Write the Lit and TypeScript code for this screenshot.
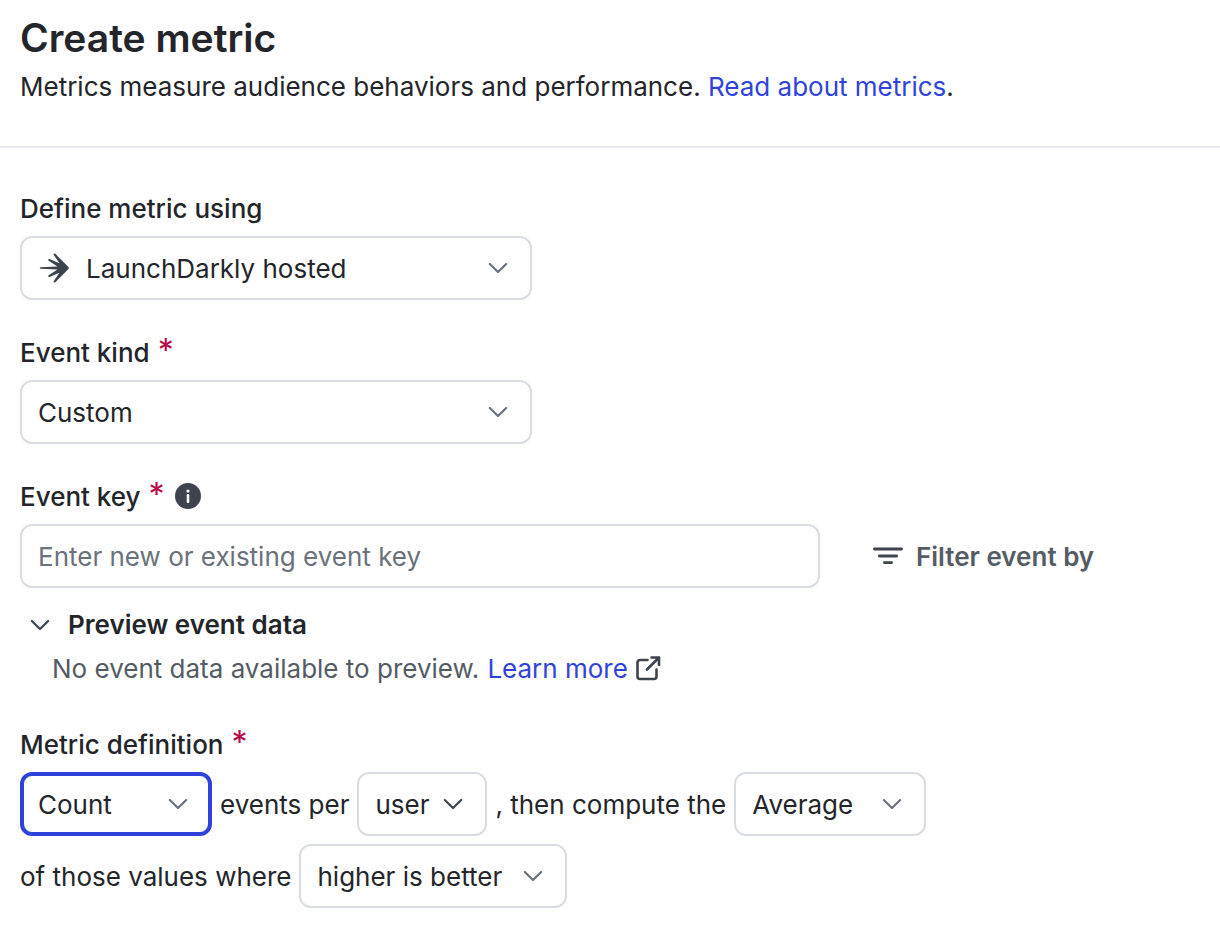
import { LitElement, html, css } from "lit";
import { customElement } from "lit/decorators.js";

@customElement("metric-chevron")
class MetricChevron extends LitElement {
  static styles = css`
    :host { display: block; width: 20px; height: 12px; }
    svg { display: block; }
  `;
  render() {
    return html`<svg width="20" height="12" viewBox="0 0 20 12" fill="none" stroke="currentColor" stroke-width="2.2" stroke-linecap="round" stroke-linejoin="round" aria-hidden="true"><path d="M1.8 2l8.2 8 8.2-8" /></svg>`;
  }
}

@customElement("app-root")
class AppRoot extends LitElement {
  static styles = css`
    :host {
      display: block;
      min-height: 100vh;
      background: #fff;
      color: #23252a;
      font: 400 26px/32px Inter, "Liberation Sans", sans-serif;
    }
    * { box-sizing: border-box; }
    header { padding: 14px 20px 42px; border-bottom: 2px solid #e9eef3; }
    h1 { margin: 0; font-size: 39px; line-height: 48px; font-weight: 600; }
    p { margin: 0; }
    .lead { margin-top: 8px; line-height: 34px; }
    a { color: #2f43dc; text-decoration: none; }
    form { padding: 44px 20px 18px; display: flex; flex-direction: column; gap: 36px; }
    .label { display: flex; align-items: center; height: 34px; font-weight: 500; margin-bottom: 10px; }
    .req { align-self: flex-start; color: #b80a48; margin-left: 8px; font-size: 32px; line-height: 30px; font-weight: 400; }
    .info { margin-left: 10px; }
    .box { position: relative; display: flex; align-items: center; height: 64px; }
    select, input {
      appearance: none;
      width: 100%;
      height: 64px;
      margin: 0;
      padding: 0 16px;
      border: 2px solid #d8dde4;
      border-radius: 12px;
      background: #fff;
      color: inherit;
      font: inherit;
      outline: none;
    }
    select { padding-top: 2px; }
    input::placeholder { color: #69717b; opacity: 1; }
    .wide { max-width: 512px; }
    .hosted select { padding-left: 64px; }
    .logo { position: absolute; left: 18px; top: 16px; pointer-events: none; }
    metric-chevron { position: absolute; right: 24px; top: 26px; pointer-events: none; color: #69717d; }
    .tight metric-chevron { color: #3d444d; }
    .row { display: flex; align-items: center; gap: 52px; }
    .row .box { flex: 0 1 800px; }
    button { display: flex; align-items: center; border: 0; background: none; padding: 0; margin: 0; font: inherit; color: inherit; }
    .filter { gap: 12px; font-weight: 600; color: #545b64; white-space: nowrap; }
    .filter span, .definition > span:not(.box) { padding-top: 2px; }
    .toggle { font-weight: 600; gap: 18px; margin: 20px 0 0 10px; height: 34px; }
    .toggle metric-chevron { position: static; color: #3d444d; }
    .preview { margin: 10px 0 6px 32px; display: flex; align-items: center; height: 34px; color: #545b64; gap: 8px; }
    .preview a { display: flex; align-items: center; gap: 8px; }
    .definition { display: flex; flex-wrap: wrap; align-items: center; gap: 8px; max-width: 940px; }
    .count { width: 192px; }
    .count select { border: 4px solid #2f43dc; padding: 2px 14px 0; }
    .user { width: 130px; }
    .average { width: 192px; }
    .better { width: 268px; }
  `;

  private req() {
    return html`<span class="req" aria-hidden="true">*</span>`;
  }

  private pick(id: string, cls: string, options: string[], label: string) {
    return html`<span class="box ${cls}">
      <select id=${id} aria-label=${label}>${options.map((o) => html`<option>${o}</option>`)}</select>
      <metric-chevron></metric-chevron>
    </span>`;
  }

  render() {
    return html`
      <header>
        <h1>Create metric</h1>
        <p class="lead">Metrics measure audience behaviors and performance. <a href="#metrics">Read about metrics</a>.</p>
      </header>
      <form>
        <div>
          <label class="label" for="source">Define metric using</label>
          <div class="box wide hosted">
            <select id="source"><option>LaunchDarkly hosted</option></select>
            <svg class="logo" width="32" height="32" viewBox="0 0 32 32" fill="#3d444d" aria-hidden="true">
              <path d="M30.2 14.7L17.3 1.8q-.9-.6-1.5 0-.5.6 0 1.3l5.6 8.2-9.8-4.2q-.9-.3-1.3.4-.3.7.4 1.2l8.8 5.9L2.6 15.2q-.8.1-.8.8 0 .7.8.8l16.9.6-8.8 5.9q-.7.5-.4 1.2.4.7 1.3.4l9.8-4.2-5.6 8.2q-.5.7 0 1.3.6.6 1.5 0l12.9-12.9q1.3-1.3 0-2.6z" />
            </svg>
            <metric-chevron></metric-chevron>
          </div>
        </div>
        <div>
          <label class="label" for="kind">Event kind ${this.req()}</label>
          <div class="box wide">
            <select id="kind" required><option>Custom</option></select>
            <metric-chevron></metric-chevron>
          </div>
        </div>
        <div>
          <label class="label" for="key">Event key ${this.req()}
            <svg class="info" width="28" height="28" viewBox="0 0 28 28" aria-hidden="true"><circle cx="13" cy="13" r="13" fill="#3d444d" /><path d="M13 12.3v6.4" stroke="#fff" stroke-width="2.6" stroke-linecap="round" /><circle cx="13" cy="8" r="1.6" fill="#fff" /></svg>
          </label>
          <div class="row">
            <div class="box"><input id="key" type="text" required placeholder="Enter new or existing event key" /></div>
            <button type="button" class="filter">
              <svg width="32" height="20" viewBox="0 0 32 20" stroke="#3d444d" stroke-width="2.8" stroke-linecap="round" aria-hidden="true"><path d="M2.4 3h27.2M7.4 10h17.2M12.4 16.6h7.2" /></svg>
              <span>Filter event by</span>
            </button>
          </div>
          <button type="button" class="toggle" aria-expanded="true"><metric-chevron></metric-chevron>Preview event data</button>
          <div class="preview">No event data available to preview.
            <a href="#learn">Learn more
              <svg width="26" height="26" viewBox="0 0 26 26" fill="none" stroke="#3d444d" stroke-width="2.6" stroke-linecap="round" stroke-linejoin="round" aria-hidden="true"><path d="M11.5 4H4a2.5 2.5 0 0 0-2.500 2.500V20.500a2.500 2.500 0 0 0 2.500 2.500H18a2.500 2.500 0 0 0 2.500-2.500V13.500M15.500 1.500h7.500v7.500M23 1.500L11 13.500" /></svg>
            </a>
          </div>
        </div>
        <div>
          <label class="label" for="measure">Metric definition ${this.req()}</label>
          <div class="definition">
            ${this.pick("measure", "count", ["Count"], "Measure")}
            <span>events per</span>
            ${this.pick("unit", "user tight", ["user"], "Unit")}
            <span>, then compute the</span>
            ${this.pick("aggregate", "average", ["Average"], "Aggregation")}
            <span>of those values where</span>
            ${this.pick("direction", "better", ["higher is better"], "Success direction")}
          </div>
        </div>
      </form>
    `;
  }
}
